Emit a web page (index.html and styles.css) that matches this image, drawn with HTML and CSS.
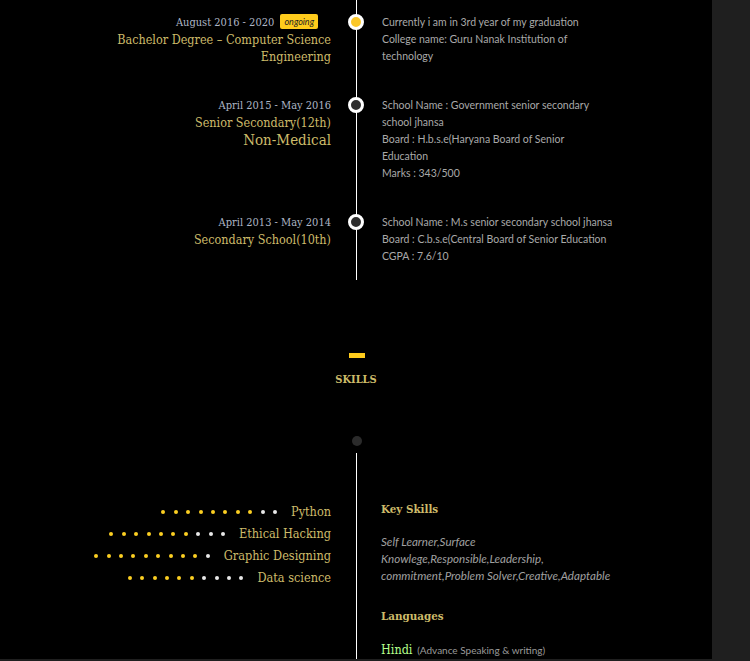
FILE: index.html
```html
<!DOCTYPE html>
<html>
<head>
<meta charset="utf-8">
<link rel="stylesheet" href="styles.css">
</head>
<body>
<div class="page">
  <section class="timeline">
    <div class="row">
      <div class="left">
        <div class="date">August 2016 - 2020 <span class="badge">ongoing</span></div>
        <div class="title">Bachelor Degree – Computer Science Engineering</div>
      </div>
      <div class="mid"><span class="marker active"></span></div>
      <div class="right">
        Currently i am in 3rd year of my graduation<br>
        College name: Guru Nanak Institution of technology
      </div>
    </div>
    <div class="row">
      <div class="left">
        <div class="date">April 2015 - May 2016</div>
        <div class="title">Senior Secondary(12th)</div>
        <div class="title big">Non-Medical</div>
      </div>
      <div class="mid"><span class="marker"></span></div>
      <div class="right">
        School Name : Government senior secondary school jhansa<br>
        Board : H.b.s.e(Haryana Board of Senior Education<br>
        Marks : 343/500
      </div>
    </div>
    <div class="row last">
      <div class="left">
        <div class="date">April 2013 - May 2014</div>
        <div class="title">Secondary School(10th)</div>
      </div>
      <div class="mid"><span class="marker"></span></div>
      <div class="right wide">
        School Name : M.s senior secondary school jhansa<br>
        Board : C.b.s.e(Central Board of Senior Education<br>
        CGPA : 7.6/10
      </div>
    </div>
  </section>

  <section class="skills-head">
    <span class="bar"></span>
    <h2>SKILLS</h2>
    <span class="knob"></span>
  </section>

  <section class="skills-body">
    <div class="left">
      <div class="skill"><span class="dots" data-n="8"></span><span class="label">Python</span></div>
      <div class="skill"><span class="dots" data-n="7"></span><span class="label">Ethical Hacking</span></div>
      <div class="skill"><span class="dots" data-n="9"></span><span class="label">Graphic Designing</span></div>
      <div class="skill"><span class="dots" data-n="6"></span><span class="label">Data science</span></div>
    </div>
    <div class="mid"></div>
    <div class="right">
      <h3>Key Skills</h3>
      <p class="keys">Self Learner,Surface Knowlege,Responsible,Leadership, commitment,Problem Solver,Creative,Adaptable</p>
      <h3 class="lang-h">Languages</h3>
      <div class="lang"><span class="lname">Hindi</span> <span class="lnote">(Advance Speaking &amp; writing)</span></div>
    </div>
  </section>
</div>
<script>
document.querySelectorAll('.dots').forEach(function (el) {
  var n = +el.getAttribute('data-n');
  for (var i = 0; i < 10; i++) {
    var d = document.createElement('i');
    d.className = i < n ? 'dot on' : 'dot';
    el.appendChild(d);
  }
});
</script>
</body>
</html>
```

FILE: styles.css
```css
html, body {
  margin: 0;
  padding: 0;
  background: #1f1f1f;
}
.page {
  width: 712px;
  height: 659px;
  background: #000;
  overflow: hidden;
}
.timeline {
  padding-top: 14px;
  padding-bottom: 15px;
  background: linear-gradient(#fff, #fff) no-repeat 356px 0 / 1px 100%;
}
.row {
  display: grid;
  grid-template-columns: 331px 50px 260px;
  margin-bottom: 32px;
}
.row.last { margin-bottom: 0; }
.left {
  text-align: right;
  font-family: "DejaVu Serif Condensed", "DejaVu Serif", serif;
}
.timeline .left {
  width: 222px;
  margin-left: auto;
}
.date {
  font-size: 11px;
  line-height: 17px;
  color: #aeb6c6;
}
.badge {
  display: inline-block;
  background: #ffcc1c;
  color: #222;
  font-family: Lato, sans-serif;
  font-style: italic;
  font-size: 9px;
  line-height: 15px;
  padding: 0 4px;
  border-radius: 2px;
  margin-left: 3px;
  margin-right: 13px;
  vertical-align: 1px;
}
.title {
  font-size: 12.5px;
  line-height: 17px;
  color: #cdbb6a;
}
.title.big {
  font-size: 15px;
  line-height: 18px;
}
.mid {
  display: flex;
  justify-content: center;
}
.marker {
  width: 10px;
  height: 10px;
  border: 3px solid #fff;
  border-radius: 50%;
  background: #2e2e2e;
}
.marker.active { background: #fbc82a; }
.right {
  font-family: Lato, "Open Sans", sans-serif;
  font-size: 10.5px;
  line-height: 17px;
  color: #a9a9a9;
  padding-left: 1px;
  width: 225px;
}
.right.wide { width: 245px; }

.skills-head {
  display: flex;
  flex-direction: column;
  align-items: center;
  padding-top: 73px;
  width: 712px;
}
.bar {
  width: 16px;
  height: 5px;
  background: #ffcc1c;
  margin-left: 1px;
}
.skills-head h2 {
  margin: 13px 0 0;
  font-family: "DejaVu Serif Condensed", "DejaVu Serif", serif;
  font-weight: bold;
  font-size: 11px;
  line-height: 17px;
  color: #cdbb6a;
}
.knob {
  width: 10px;
  height: 10px;
  border-radius: 50%;
  background: #2b2b2b;
  margin-top: 48px;
  margin-left: 1px;
}

.skills-body {
  margin-top: 7px;
  display: grid;
  grid-template-columns: 331px 50px 260px;
  padding-top: 48px;
  height: 200px;
  background: linear-gradient(#fff, #fff) no-repeat 356px 0 / 1px 100%;
}
.skill {
  display: flex;
  justify-content: flex-end;
  align-items: center;
  height: 22px;
}
.dots {
  display: flex;
  gap: 8.4px;
  margin-right: 14px;
}
.dot {
  display: block;
  width: 4px;
  height: 4px;
  border-radius: 50%;
  background: #e8e8e8;
}
.dot.on { background: #fccf22; }
.label {
  font-size: 12.6px;
  line-height: 22px;
  color: #cdbb6a;
}
.skills-body .right { padding-left: 0; width: 260px; }
.skills-body h3 {
  margin: 0;
  font-family: "DejaVu Serif Condensed", "DejaVu Serif", serif;
  font-weight: bold;
  font-size: 11.5px;
  line-height: 17px;
  color: #cdbb6a;
}
.keys {
  margin: 15px 0 0;
  font-style: italic;
  font-size: 11.6px;
  line-height: 17px;
  color: #a0a0a0;
  width: 240px;
}
.skills-body h3.lang-h { margin-top: 24px; }
.lang {
  margin-top: 16px;
  line-height: 17px;
}
.lname {
  font-family: "DejaVu Serif Condensed", "DejaVu Serif", serif;
  font-size: 12.5px;
  color: #b4ff8c;
}
.lnote {
  font-size: 10px;
  color: #9a9a9a;
  margin-left: 2px;
}
```
